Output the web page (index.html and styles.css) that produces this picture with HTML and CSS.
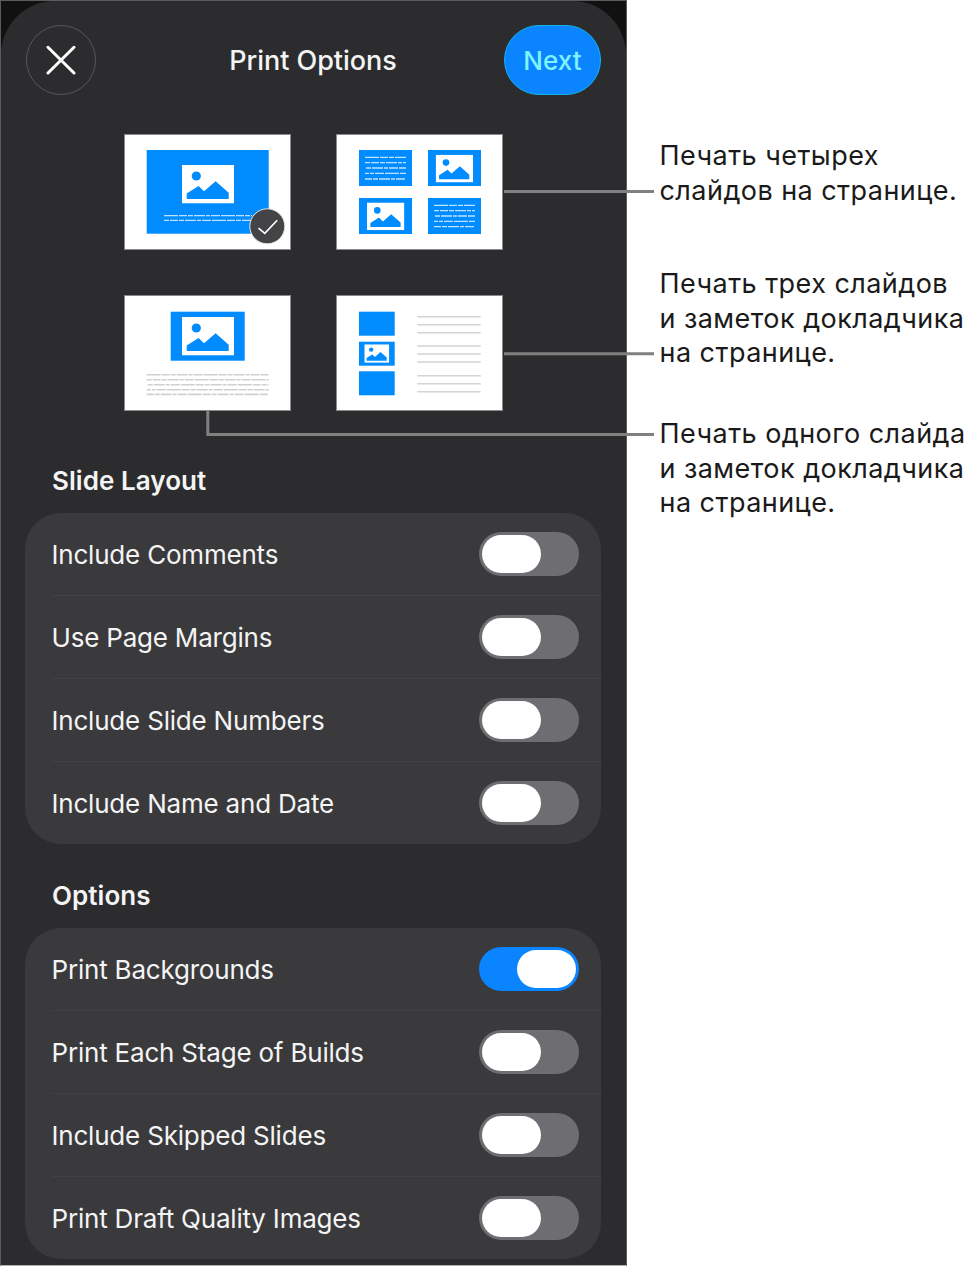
FILE: index.html
```html
<!DOCTYPE html>
<html lang="en">
<head>
    <meta charset="UTF-8">
    <meta name="viewport" content="width=device-width, initial-scale=1.0">
    <title>Print Options</title>
    <link rel="stylesheet" href="styles.css">
</head>
<body>
    <svg class="hidden-defs" width="0" height="0">
        <symbol id="pic" viewBox="0 0 52 38.5">
            <rect width="52" height="38.5" fill="#fff"/>
            <circle cx="14.3" cy="11" r="4.6" fill="#008cff"/>
            <path d="M4.7 34V28.4L16.6 21L22 26.3L33.6 16.2L46.7 27.7V34Z" fill="#008cff"/>
        </symbol>
    </svg>

    <div class="page">
        <div class="phone">
            <div class="sheet">
                <!-- Top bar -->
                <div class="top-bar">
                    <div class="close-btn">
                        <svg width="30" height="30" viewBox="0 0 30 30">
                            <path d="M2 2.3L28 28M28 2.3L2 28" stroke="#fff" stroke-width="3" stroke-linecap="round" fill="none"/>
                        </svg>
                    </div>
                    <div class="top-title">Print Options</div>
                    <div class="next-btn">Next</div>
                </div>

                <!-- Layout thumbnails -->
                <div class="thumbs">
                    <svg class="thumb" viewBox="124 134 167 116">
                        <rect x="124" y="134" width="167" height="116" fill="#fff"/>
                        <rect x="146.7" y="150" width="122" height="83.7" fill="#008cff"/>
                        <use href="#pic" x="182" y="165" width="52" height="38.5"/>
                        <g class="dash-lines white">
                            <path d="M164 215.7H252"/>
                            <path d="M164 220.4H252"/>
                        </g>
                        <circle cx="267.3" cy="226.3" r="17.5" fill="#444446" stroke="#e8e8e8" stroke-width="1"/>
                        <path d="M258.5 228.2L264.8 233.4L277.2 220.2" fill="none" stroke="#fff" stroke-width="1.6"/>
                    </svg>

                    <svg class="thumb" viewBox="336 134 167 116">
                        <rect x="336" y="134" width="167" height="116" fill="#fff"/>
                        <rect x="359" y="150" width="53" height="36" fill="#008cff"/>
                        <rect x="428" y="150" width="53" height="36" fill="#008cff"/>
                        <rect x="359" y="198" width="53" height="36" fill="#008cff"/>
                        <rect x="428" y="198" width="53" height="36" fill="#008cff"/>
                        <use href="#pic" x="435.7" y="154.7" width="37.4" height="27.7"/>
                        <use href="#pic" x="367" y="202.5" width="37.4" height="27.7"/>
                        <g class="dash-lines white">
                            <path d="M365 157.3H406"/>
                            <path d="M365 162.7H406"/>
                            <path d="M365 168H406"/>
                            <path d="M365 173.3H406"/>
                            <path d="M365 179H406"/>
                        </g>
                        <g class="dash-lines white">
                            <path d="M434 205.3H475"/>
                            <path d="M434 210.7H475"/>
                            <path d="M434 216H475"/>
                            <path d="M434 221.3H475"/>
                            <path d="M434 226.7H475"/>
                        </g>
                    </svg>

                    <svg class="thumb" viewBox="124 295 167 116">
                        <rect x="124" y="295" width="167" height="116" fill="#fff"/>
                        <rect x="170.7" y="311.7" width="74" height="49" fill="#008cff"/>
                        <use href="#pic" x="182" y="317" width="52" height="38.5"/>
                        <g class="dash-lines grey">
                            <path d="M146.7 374.7H268.7"/>
                            <path d="M146.7 379.7H268.7"/>
                            <path d="M146.7 384.7H268.7"/>
                            <path d="M146.7 389.7H268.7"/>
                            <path d="M146.7 394.4H268.7"/>
                        </g>
                    </svg>

                    <svg class="thumb" viewBox="336 295 167 116">
                        <rect x="336" y="295" width="167" height="116" fill="#fff"/>
                        <rect x="359" y="311.7" width="35.7" height="24" fill="#008cff"/>
                        <rect x="359" y="341.7" width="35.7" height="24" fill="#008cff"/>
                        <rect x="359" y="371.3" width="35.7" height="24" fill="#008cff"/>
                        <use href="#pic" x="364.3" y="344.3" width="25" height="18.5"/>
                        <path d="M417.3 316.7H480.7M417.3 324.7H480.7M417.3 332.7H480.7M417.3 346H480.7M417.3 354H480.7M417.3 362H480.7M417.3 375.7H480.7M417.3 383.7H480.7M417.3 391.7H480.7" class="note-line"/>
                    </svg>
                </div>

                <!-- Slide Layout -->
                <div class="section-title first">Slide Layout</div>
                <div class="card">
                    <div class="row"><span>Include Comments</span><span class="toggle"><span class="knob"></span></span></div>
                    <div class="row"><span>Use Page Margins</span><span class="toggle"><span class="knob"></span></span></div>
                    <div class="row"><span>Include Slide Numbers</span><span class="toggle"><span class="knob"></span></span></div>
                    <div class="row"><span>Include Name and Date</span><span class="toggle"><span class="knob"></span></span></div>
                </div>

                <!-- Options -->
                <div class="section-title">Options</div>
                <div class="card">
                    <div class="row"><span>Print Backgrounds</span><span class="toggle on"><span class="knob"></span></span></div>
                    <div class="row"><span>Print Each Stage of Builds</span><span class="toggle"><span class="knob"></span></span></div>
                    <div class="row"><span>Include Skipped Slides</span><span class="toggle"><span class="knob"></span></span></div>
                    <div class="row"><span>Print Draft Quality Images</span><span class="toggle"><span class="knob"></span></span></div>
                </div>
            </div>
        </div>

        <!-- Callouts -->
        <div class="callouts">
            <p class="callout">Печать четырех<br>слайдов на странице.</p>
            <p class="callout second">Печать трех слайдов<br>и заметок докладчика<br>на странице.</p>
            <p class="callout third">Печать одного слайда<br>и заметок докладчика<br>на странице.</p>
        </div>

        <!-- Leader lines, drawn over the sheet -->
        <svg class="leaders" viewBox="0 0 976 1266">
            <path d="M504 191.5H654M504 353.8H654M207.8 411V434.5H654" fill="none" stroke="#808080" stroke-width="3"/>
        </svg>
    </div>
</body>
</html>
```

FILE: styles.css
```css
* {
    margin: 0;
    padding: 0;
    box-sizing: border-box;
}

html, body {
    width: 976px;
    height: 1266px;
    background: #fff;
    overflow: hidden;
    font-family: 'Inter', 'Liberation Sans', sans-serif;
}

.hidden-defs {
    display: block;
    height: 0;
}

.page {
    position: relative;
    display: flex;
    width: 976px;
    height: 1266px;
}

.phone {
    width: 627px;
    height: 1266px;
    flex-shrink: 0;
    background: #111;
    border: 1px solid #5c5c5e;
    border-bottom-color: #b0b0b0;
}

.sheet {
    height: 100%;
    background: #2c2c2e;
    border-radius: 54px 54px 0 0;
    padding: 24px 25px 0 24px;
    color: #f4f4f5;
}

/* Top bar */
.top-bar {
    display: grid;
    grid-template-columns: 1fr auto 1fr;
    align-items: center;
    height: 70px;
}

.close-btn {
    width: 70px;
    height: 70px;
    margin-left: 1px;
    border-radius: 50%;
    border: 1px solid rgba(255, 255, 255, 0.2);
    display: flex;
    align-items: center;
    justify-content: center;
}

.top-title {
    font-size: 27px;
    font-weight: 500;
    letter-spacing: -0.05px;
}

.next-btn {
    justify-self: end;
    width: 97px;
    height: 70px;
    border-radius: 35px;
    background: #0a84ff;
    border: 1px solid #12b4ee;
    color: #7ff3ff;
    font-size: 26px;
    font-weight: 500;
    letter-spacing: 0.1px;
    display: flex;
    align-items: center;
    justify-content: center;
}

/* Thumbnails */
.thumbs {
    display: grid;
    grid-template-columns: 167px 167px;
    grid-auto-rows: 116px;
    gap: 45px;
    margin: 39px 0 0 99px;
}

.thumb {
    display: block;
    width: 167px;
    height: 116px;
    outline: 1px solid #8a8a8a;
    outline-offset: -1px;
}

/* Fake text lines; each line starts at another point of the dash pattern */
.dash-lines path {
    fill: none;
    stroke-dasharray: 14 1 8 1 5 1 11 1 4 1 9 1;
}

.dash-lines.white path {
    stroke: #bfe2ff;
    stroke-width: 1.3;
}

.dash-lines.grey path {
    stroke: #d0d0d0;
    stroke-width: 1.6;
}

.dash-lines path:nth-child(2) { stroke-dashoffset: 9; }
.dash-lines path:nth-child(3) { stroke-dashoffset: 23; }
.dash-lines path:nth-child(4) { stroke-dashoffset: 37; }
.dash-lines path:nth-child(5) { stroke-dashoffset: 16; }

.note-line {
    fill: none;
    stroke: #d4d4d4;
    stroke-width: 1.6;
}

/* Sections */
.section-title {
    font-size: 26px;
    font-weight: 600;
    line-height: 32px;
    letter-spacing: 0.05px;
    padding-left: 27px;
    margin: 36px 0 16px;
}

.section-title.first {
    margin-top: 54px;
}

.card {
    background: #3a3a3c;
    border-radius: 36px;
    padding-left: 26.5px;
}

.row {
    display: flex;
    align-items: center;
    justify-content: space-between;
    height: 83px;
    padding-right: 22px;
    border-top: 1px solid #424244;
    font-size: 26px;
    letter-spacing: -0.2px;
}

.row:first-child {
    height: 82px;
    border-top: none;
}

/* Toggles */
.toggle {
    display: flex;
    width: 100px;
    height: 44px;
    padding: 3px;
    border-radius: 22px;
    background: #6e6e72;
}

.toggle.on {
    background: #0a84ff;
    justify-content: flex-end;
}

.knob {
    width: 59px;
    height: 38px;
    border-radius: 19px;
    background: #fff;
}

/* Callouts */
.callouts {
    padding: 139px 0 0 32.5px;
}

.callout {
    font-size: 27px;
    line-height: 34.5px;
    letter-spacing: 0.45px;
    color: #1a1a1a;
    white-space: nowrap;
}

.callout.second {
    margin-top: 59px;
}

.callout.third {
    margin-top: 46.5px;
}

.leaders {
    position: absolute;
    top: 0;
    left: 0;
    width: 976px;
    height: 1266px;
    pointer-events: none;
}
```
